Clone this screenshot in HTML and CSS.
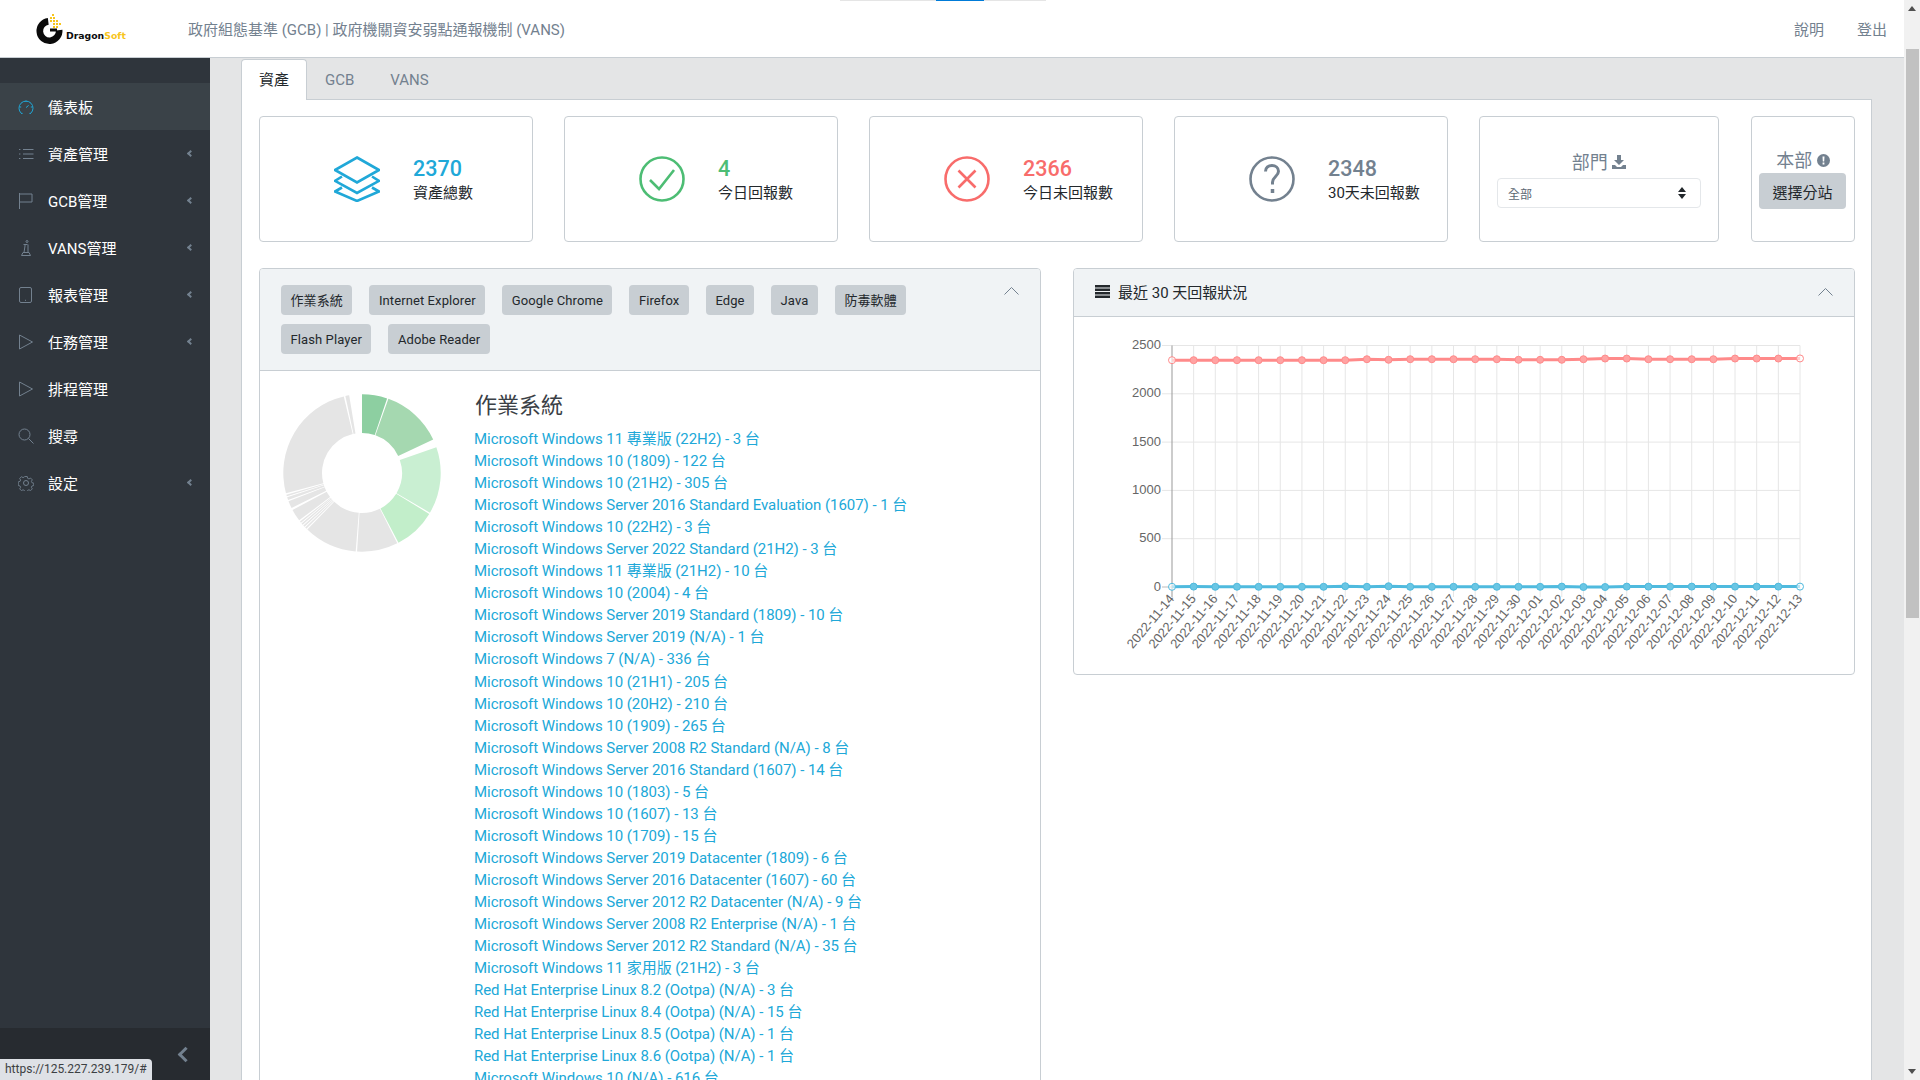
FILE: index.html
```html
<!DOCTYPE html>
<html lang="zh-Hant">
<head>
    <meta charset="UTF-8">
    <meta name="viewport" content="width=device-width, initial-scale=1.0">
    <title>DragonSoft</title>
    <link rel="stylesheet" href="styles.css">
</head>
<body>
    <div class="loader"><span class="loader-blue"></span></div>
    <div class="page">
        <header class="topbar">
            <div class="logo">
                <svg class="logo-mark" width="28" height="32" viewBox="0 0 28 32">
                    <circle cx="13.5" cy="18" r="9.7" fill="none" stroke="#0b0b0b" stroke-width="6.6" stroke-dasharray="45 16" transform="rotate(-5 13.5 18)"/>
                    <rect x="14" y="15.5" width="7" height="3" fill="#0b0b0b"/>
                    <g fill="#f7c51d">
                        <rect x="16" y="1" width="2" height="2"/>
                        <rect x="14" y="4" width="2" height="2"/><rect x="17" y="4" width="2" height="2"/>
                        <rect x="14" y="7" width="2" height="2"/><rect x="17" y="7" width="2" height="2"/><rect x="20" y="7" width="2" height="2"/>
                        <rect x="17" y="10" width="2" height="2"/><rect x="20" y="10" width="2" height="2"/><rect x="23" y="10" width="2" height="2"/>
                        <rect x="17" y="13" width="2" height="2"/><rect x="20" y="13" width="2" height="2"/>
                    </g>
                </svg>
                <span class="logo-text">Dragon<span class="logo-soft">Soft</span></span>
            </div>
            <div class="topbar-title">政府組態基準 (GCB) | 政府機關資安弱點通報機制 (VANS)</div>
            <nav class="topbar-links">
                <a href="#">說明</a>
                <a href="#">登出</a>
            </nav>
        </header>

        <div class="app-body">
            <aside class="sidebar">
                <ul class="nav">
                    <li class="nav-item active">
                        <svg class="nav-icon" viewBox="0 0 16 16"><path d="M3.2 14.2a7 7 0 1 1 9.6 0"/><path d="M3 14.4h1.6M11.4 14.4H13M8 8.6l2.6-2.2M8 1.6v1.4M2 8h1.2M12.8 8H14"/></svg>
                        <span>儀表板</span>
                    </li>
                    <li class="nav-item">
                        <svg class="nav-icon" viewBox="0 0 16 16"><path d="M1 3.5h1.4M1 8h1.4M1 12.5h1.4M5 3.5h10.5M5 8h10.5M5 12.5h10.5"/></svg>
                        <span>資產管理</span><i class="caret"></i>
                    </li>
                    <li class="nav-item">
                        <svg class="nav-icon" viewBox="0 0 16 16"><path d="M1.500 0v16M1.500 1h12.500v8H1.500"/></svg>
                        <span>GCB管理</span><i class="caret"></i>
                    </li>
                    <li class="nav-item">
                        <svg class="nav-icon" viewBox="0 0 16 16"><circle cx="9" cy="1.500" r="1"/><path d="M5.500 4.500h4M7 4.500v1.500l-1 6.500M10 4.500v8M3.500 15.500l1.500-3h6l1.500 3z"/></svg>
                        <span>VANS管理</span><i class="caret"></i>
                    </li>
                    <li class="nav-item">
                        <svg class="nav-icon" viewBox="0 0 16 16"><rect x="1.500" y="0.500" width="12" height="15" rx="1.500"/><path d="M7 13.300h1"/></svg>
                        <span>報表管理</span><i class="caret"></i>
                    </li>
                    <li class="nav-item">
                        <svg class="nav-icon" viewBox="0 0 16 16"><path d="M1.500 1l13 7-13 7z"/></svg>
                        <span>任務管理</span><i class="caret"></i>
                    </li>
                    <li class="nav-item">
                        <svg class="nav-icon" viewBox="0 0 16 16"><path d="M1.500 1l13 7-13 7z"/></svg>
                        <span>排程管理</span>
                    </li>
                    <li class="nav-item">
                        <svg class="nav-icon" viewBox="0 0 16 16"><circle cx="6.500" cy="6.500" r="5.500"/><path d="M10.500 10.500l5 5"/></svg>
                        <span>搜尋</span>
                    </li>
                    <li class="nav-item">
                        <svg class="nav-icon" viewBox="0 0 16 16"><circle cx="8" cy="8" r="2.500"/><path d="M6.600 .8h2.800l.4 2 1.500.7 1.800-1 1.900 2-1 1.700.6 1.500 2 .5v2.600l-2 .5-.6 1.500 1 1.700-1.900 2-1.800-1-1.500.7-.4 2H6.600l-.4-2-1.500-.7-1.800 1-1.900-2 1-1.700-.6-1.500-2-.5V6.700l2-.5.600-1.500-1-1.700 1.900-2 1.800 1 1.500-.7z" transform="translate(.8 .8) scale(.9)"/></svg>
                        <span>設定</span><i class="caret"></i>
                    </li>
                </ul>
                <div class="sidebar-footer"><i class="caret caret-big"></i></div>
            </aside>

            <main class="main">
                <div class="tabs">
                    <a class="tab active" href="#">資產</a>
                    <a class="tab" href="#">GCB</a>
                    <a class="tab" href="#">VANS</a>
                </div>
                <div class="tab-panel">
                    <div class="stats">
                        <div class="stat">
                            <svg class="stat-icon" viewBox="0 0 46 46" fill="none" stroke="#20a8d8" stroke-width="2.600"><path d="M23 1.500L45 14 23 26.500 1 14z"/><path d="M8 20.500l-7 4.300L23 37l22-12.200-7-4.300"/><path d="M8 31.500l-7 4L23 45l22-9.500-7-4"/></svg>
                            <div>
                                <div class="stat-num blue">2370</div>
                                <div class="stat-label">資產總數</div>
                            </div>
                        </div>
                        <div class="stat">
                            <svg class="stat-icon" viewBox="0 0 46 46" fill="none" stroke="#4dbd74" stroke-width="2.600"><circle cx="23" cy="23" r="21.500"/><path d="M11 24l9 9 15-19"/></svg>
                            <div>
                                <div class="stat-num green">4</div>
                                <div class="stat-label">今日回報數</div>
                            </div>
                        </div>
                        <div class="stat">
                            <svg class="stat-icon" viewBox="0 0 46 46" fill="none" stroke="#f86c6b" stroke-width="2.600"><circle cx="23" cy="23" r="21.500"/><path d="M14.500 14.500l17 17M31.500 14.500l-17 17"/></svg>
                            <div>
                                <div class="stat-num red">2366</div>
                                <div class="stat-label">今日未回報數</div>
                            </div>
                        </div>
                        <div class="stat">
                            <svg class="stat-icon" viewBox="0 0 46 46" fill="none" stroke="#73818f" stroke-width="2.600"><circle cx="23" cy="23" r="21.500"/><path d="M16.500 15.500c0-4 3-6 6.500-6s6.500 2.200 6.500 5.800c0 5-6 5.500-6 11v2.200" stroke-width="3"/><path d="M23.500 33v4" stroke-width="3.500"/></svg>
                            <div>
                                <div class="stat-num gray">2348</div>
                                <div class="stat-label">30天未回報數</div>
                            </div>
                        </div>
                        <div class="dept-card">
                            <div class="dept-title">部門
                                <svg width="14" height="14" viewBox="0 0 14 14" fill="#73818f"><path d="M5 0h4v5h3L7 10 2 5h3z"/><path d="M0 10h3l2 2h4l2-2h3v4H0z"/></svg>
                            </div>
                            <div class="dept-select">
                                <span>全部</span>
                                <svg width="8" height="12" viewBox="0 0 8 12" fill="#23282c"><path d="M4 0l4 5H0zM4 12L0 7h8z"/></svg>
                            </div>
                        </div>
                        <div class="branch-card">
                            <div class="branch-title">本部
                                <svg width="13" height="13" viewBox="0 0 13 13"><circle cx="6.500" cy="6.500" r="6.500" fill="#73818f"/><path d="M5.500 2.500h2l-.3 5h-1.400zM5.600 8.600h1.800v1.800H5.600z" fill="#fff"/></svg>
                            </div>
                            <button class="branch-btn">選擇分站</button>
                        </div>
                    </div>

                    <div class="columns">
                        <section class="panel panel-os">
                            <div class="panel-head chips-head">
                                <div class="chips">
                                    <a class="chip" href="#">作業系統</a>
                                    <a class="chip" href="#">Internet Explorer</a>
                                    <a class="chip" href="#">Google Chrome</a>
                                    <a class="chip" href="#">Firefox</a>
                                    <a class="chip" href="#">Edge</a>
                                    <a class="chip" href="#">Java</a>
                                    <a class="chip" href="#">防毒軟體</a>
                                    <a class="chip" href="#">Flash Player</a>
                                    <a class="chip" href="#">Adobe Reader</a>
                                </div>
                                <svg class="collapse-icon" width="15" height="8" viewBox="0 0 15 8"><path d="M.5 7.500l7-7 7 7"/></svg>
                            </div>
                            <div class="os-body">
                                <div class="donut-box"><svg id="donut" width="160" height="160" viewBox="-80 -80 160 160"></svg></div>
                                <div class="os-list">
                                    <h4>作業系統</h4>
                                    <a href="#">Microsoft Windows 11 專業版 (22H2) - 3 台</a>
                                    <a href="#">Microsoft Windows 10 (1809) - 122 台</a>
                                    <a href="#">Microsoft Windows 10 (21H2) - 305 台</a>
                                    <a href="#">Microsoft Windows Server 2016 Standard Evaluation (1607) - 1 台</a>
                                    <a href="#">Microsoft Windows 10 (22H2) - 3 台</a>
                                    <a href="#">Microsoft Windows Server 2022 Standard (21H2) - 3 台</a>
                                    <a href="#">Microsoft Windows 11 專業版 (21H2) - 10 台</a>
                                    <a href="#">Microsoft Windows 10 (2004) - 4 台</a>
                                    <a href="#">Microsoft Windows Server 2019 Standard (1809) - 10 台</a>
                                    <a href="#">Microsoft Windows Server 2019 (N/A) - 1 台</a>
                                    <a href="#">Microsoft Windows 7 (N/A) - 336 台</a>
                                    <a href="#">Microsoft Windows 10 (21H1) - 205 台</a>
                                    <a href="#">Microsoft Windows 10 (20H2) - 210 台</a>
                                    <a href="#">Microsoft Windows 10 (1909) - 265 台</a>
                                    <a href="#">Microsoft Windows Server 2008 R2 Standard (N/A) - 8 台</a>
                                    <a href="#">Microsoft Windows Server 2016 Standard (1607) - 14 台</a>
                                    <a href="#">Microsoft Windows 10 (1803) - 5 台</a>
                                    <a href="#">Microsoft Windows 10 (1607) - 13 台</a>
                                    <a href="#">Microsoft Windows 10 (1709) - 15 台</a>
                                    <a href="#">Microsoft Windows Server 2019 Datacenter (1809) - 6 台</a>
                                    <a href="#">Microsoft Windows Server 2016 Datacenter (1607) - 60 台</a>
                                    <a href="#">Microsoft Windows Server 2012 R2 Datacenter (N/A) - 9 台</a>
                                    <a href="#">Microsoft Windows Server 2008 R2 Enterprise (N/A) - 1 台</a>
                                    <a href="#">Microsoft Windows Server 2012 R2 Standard (N/A) - 35 台</a>
                                    <a href="#">Microsoft Windows 11 家用版 (21H2) - 3 台</a>
                                    <a href="#">Red Hat Enterprise Linux 8.2 (Ootpa) (N/A) - 3 台</a>
                                    <a href="#">Red Hat Enterprise Linux 8.4 (Ootpa) (N/A) - 15 台</a>
                                    <a href="#">Red Hat Enterprise Linux 8.5 (Ootpa) (N/A) - 1 台</a>
                                    <a href="#">Red Hat Enterprise Linux 8.6 (Ootpa) (N/A) - 1 台</a>
                                    <a href="#">Microsoft Windows 10 (N/A) - 616 台</a>
                                </div>
                            </div>
                        </section>

                        <section class="panel panel-chart">
                            <div class="panel-head chart-head">
                                <svg width="15" height="13" viewBox="0 0 15 13" fill="#23282c"><path d="M0 0h15v2.500H0zM0 3.500h15V6H0zM0 7h15v2.500H0zM0 10.500h15V13H0z"/></svg>
                                <span>最近 30 天回報狀況</span>
                                <svg class="collapse-icon" width="15" height="8" viewBox="0 0 15 8"><path d="M.5 7.500l7-7 7 7"/></svg>
                            </div>
                            <svg id="chart" width="780" height="357" viewBox="0 0 780 357"></svg>
                        </section>
                    </div>
                </div>
            </main>
        </div>
    </div>
    <div class="scrollbar">
        <i class="arrow-up"></i>
        <div class="thumb"></div>
        <i class="arrow-down"></i>
    </div>
    <div class="status-bubble">https://125.227.239.179/#</div>

    <script src="charts.js"></script>
</body>
</html>
```

FILE: styles.css
```css
* {
    box-sizing: border-box;
}
html, body {
    height: 100%;
}
body {
    margin: 0;
    display: flex;
    height: 1080px;
    overflow: hidden;
    font-family: Roboto, "Noto Sans CJK TC", sans-serif;
    font-size: 15px;
    color: #23282c;
    background-color: #e4e5e6;
}
a {
    text-decoration: none;
    color: inherit;
}
.page {
    flex: 1;
    min-width: 0;
    display: flex;
    flex-direction: column;
}

/* thin loading bar on top of everything */
.loader {
    position: absolute;
    top: 0;
    left: 840px;
    width: 206px;
    height: 1px;
    background-color: #e5e5e5;
    z-index: 5;
}
.loader-blue {
    display: block;
    width: 48px;
    height: 1px;
    margin-left: 96px;
    background-color: #007bd8;
}

.topbar {
    flex: none;
    display: flex;
    align-items: center;
    height: 58px;
    padding-left: 36px;
    background-color: #fff;
    border-bottom: 1px solid #c8ced3;
}
.logo {
    display: flex;
    width: 152px;
    height: 32px;
    margin-top: 1px;
}
.logo-text {
    align-self: flex-end;
    margin: 0 0 4px 2px;
    font-family: "DejaVu Sans", sans-serif;
    font-size: 9.3px;
    font-weight: 700;
    line-height: 11px;
    color: #0b0b0b;
}
.logo-soft {
    color: #f7c51d;
}
.topbar-title {
    color: #73818f;
}
.topbar-links {
    display: flex;
    gap: 33px;
    margin-left: auto;
    padding-right: 17px;
    color: #73818f;
}

.app-body {
    flex: 1;
    min-height: 0;
    display: flex;
}

.sidebar {
    flex: none;
    width: 210px;
    display: flex;
    flex-direction: column;
    background-color: #2f353c;
}
.nav {
    flex: 1;
    margin: 0;
    padding: 25px 0 0;
    list-style: none;
}
.nav-item {
    display: flex;
    align-items: center;
    height: 47px;
    padding: 0 17px 0 18px;
    color: #fff;
}
.nav-item.active {
    background-color: #3a4248;
}
.nav-icon {
    flex: none;
    width: 16px;
    height: 16px;
    margin-right: 14px;
    fill: none;
    stroke: #73818f;
    stroke-width: 1;
}
.active .nav-icon {
    stroke: #20a8d8;
}
.caret {
    width: 5px;
    height: 5px;
    margin-left: auto;
    border-left: 2px solid #73818f;
    border-bottom: 2px solid #73818f;
    transform: rotate(45deg);
}
.sidebar-footer {
    flex: none;
    display: flex;
    align-items: center;
    height: 52px;
    padding-right: 19px;
    background-color: #272b30;
}
.caret-big {
    width: 11px;
    height: 11px;
    border-width: 3px;
}

.main {
    flex: 1;
    min-width: 0;
    padding: 1px 32px 0 31px;
}
.tabs {
    display: flex;
    height: 41px;
    margin-bottom: -1px;
}
.tab {
    padding: 0 18px;
    line-height: 42px;
    color: #73818f;
    white-space: nowrap;
}
.tab.active {
    position: relative;
    width: 66px;
    padding: 0 0 0 17px;
    color: #23282c;
    background-color: #fff;
    border: 1px solid #c8ced3;
    border-bottom: none;
    border-radius: 4px 4px 0 0;
    line-height: 41px;
    z-index: 1;
}
.tab-panel {
    height: 1000px;
    padding: 16px 16px 0 17px;
    background-color: #fff;
    border: 1px solid #c8ced3;
}

.stats {
    display: flex;
    gap: 31px;
    height: 126px;
}
.stat, .dept-card, .branch-card {
    border: 1px solid #c8ced3;
    border-radius: 4px;
    background-color: #fff;
}
.stat {
    flex: none;
    width: 274px;
    display: flex;
    align-items: center;
    gap: 33px;
    padding-left: 74px;
}
.stat-icon {
    flex: none;
    width: 46px;
    height: 46px;
}
.stat-num {
    margin-top: 2px;
    font-size: 21.5px;
    font-weight: 500;
    line-height: 26px;
}
.stat-label {
    line-height: 22px;
}
.blue { color: #20a8d8; }
.green { color: #4dbd74; }
.red { color: #f86c6b; }
.gray { color: #73818f; }

.dept-card {
    flex: none;
    width: 240px;
    padding: 34px 17px 0;
    text-align: center;
}
.dept-title, .branch-title {
    font-size: 18px;
    line-height: 24px;
    color: #73818f;
}
.dept-select {
    display: flex;
    align-items: center;
    justify-content: space-between;
    height: 30px;
    margin-top: 3px;
    padding: 0 14px 0 10px;
    font-size: 12px;
    color: #5c6873;
    border: 1px solid #e4e7ea;
    border-radius: 4px;
}
.branch-card {
    flex: none;
    width: 104px;
    margin-left: 1px;
    padding: 32px 7px 0 7px;
    text-align: center;
}
.branch-btn {
    display: block;
    width: 87px;
    height: 36px;
    padding: 0;
    font-family: inherit;
    font-size: 15px;
    color: #23282c;
    background-color: #c8ced3;
    border: none;
    border-radius: 4px;
}

.columns {
    display: flex;
    align-items: flex-start;
    gap: 32px;
    margin-top: 26px;
}
.panel {
    flex: none;
    width: 782px;
    background-color: #fff;
    border: 1px solid #c8ced3;
    border-radius: 4px;
}
.panel-head {
    display: flex;
    background-color: #f0f3f5;
    border-bottom: 1px solid #c8ced3;
    border-radius: 3px 3px 0 0;
}
.chips-head {
    height: 102px;
    padding: 16px 21px 0;
}
.chips {
    display: flex;
    flex-wrap: wrap;
    align-content: flex-start;
    gap: 9px 17px;
    width: 660px;
}
.chip {
    height: 30px;
    padding: 0 9.5px;
    font-size: 13px;
    letter-spacing: .1px;
    line-height: 31px;
    background-color: #c8ced3;
    border-radius: 4px;
}
.collapse-icon {
    flex: none;
    margin-left: auto;
    fill: none;
    stroke: #73818f;
}
.chips-head .collapse-icon {
    margin-top: 2px;
}

.os-body {
    display: flex;
    height: 720px;
}
.donut-box {
    flex: none;
    width: 214px;
    padding: 22px 0 0 22px;
}
.os-list {
    overflow: hidden;
}
.os-list h4 {
    margin: 21px 0 8px;
    padding-left: 1px;
    font-size: 22px;
    font-weight: 400;
    line-height: 28px;
    color: #3a4046;
}
.os-list a {
    display: block;
    letter-spacing: -.05px;
    line-height: 22.04px;
    color: #20a8d8;
}

.chart-head {
    align-items: center;
    gap: 8px;
    height: 48px;
    padding: 0 21px 2px 21px;
}
#chart {
    display: block;
}
#chart text {
    font-family: "Liberation Sans", sans-serif;
    font-size: 13px;
    fill: #666;
}

.scrollbar {
    flex: none;
    position: relative;
    width: 16px;
    padding: 49px 1px 0 2px;
    background-color: #f1f1f1;
}
.thumb {
    height: 569px;
    background-color: #c1c1c1;
}
.arrow-up, .arrow-down {
    position: absolute;
    left: 4px;
    border-left: 4px solid transparent;
    border-right: 4px solid transparent;
}
.arrow-up {
    top: 6px;
    border-bottom: 5px solid #505050;
}
.arrow-down {
    bottom: 6px;
    border-top: 5px solid #505050;
}

/* browser link preview, lies over the sidebar */
.status-bubble {
    position: absolute;
    left: 0;
    bottom: 0;
    width: 152px;
    height: 21px;
    padding-left: 5px;
    font-size: 12px;
    line-height: 21px;
    color: #3c4043;
    background-color: #dee1e6;
    border-top-right-radius: 4px;
    white-space: nowrap;
}
```

FILE: charts.js
```js
const SVG_NS = 'http://www.w3.org/2000/svg';

function addEl(parent, tag, attrs, text) {
    const el = document.createElementNS(SVG_NS, tag);
    Object.keys(attrs).forEach(key => el.setAttribute(key, attrs[key]));
    if (text !== undefined) el.textContent = text;
    parent.appendChild(el);
    return el;
}

// doughnut, angles are degrees clockwise from the top
const slices = [
    [0, 18.6, '#8dcfa1'], [19.6, 64.8, '#a5d8b0'], [70.9, 120.3, '#c9efd2'], [121.3, 152.4, '#c2eeca'],
    [153.4, 183.6, '#e5e5e5'], [184.6, 224, '#e5e5e5'], [225, 226.2, '#e5e5e5'], [226.9, 228.2, '#e5e5e5'],
    [228.9, 230.2, '#e5e5e5'], [230.9, 232, '#e5e5e5'], [233, 242, '#e5e5e5'], [243.5, 249, '#e5e5e5'],
    [250, 252, '#e5e5e5'], [252.8, 254, '#e5e5e5'], [255, 346.6, '#e5e5e5'], [347.8, 350.6, '#e5e5e5']
];

function polar(radius, deg) {
    const rad = deg * Math.PI / 180;
    return (radius * Math.sin(rad)).toFixed(2) + ' ' + (-radius * Math.cos(rad)).toFixed(2);
}

const donut = document.getElementById('donut');
slices.forEach(s => {
    const large = s[1] - s[0] > 180 ? 1 : 0;
    const d = 'M' + polar(78.7, s[0]) + 'A78.7 78.7 0 ' + large + ' 1 ' + polar(78.7, s[1]) +
        'L' + polar(40, s[1]) + 'A40 40 0 ' + large + ' 0 ' + polar(40, s[0]) + 'Z';
    addEl(donut, 'path', { d: d, fill: s[2] });
});

const chart = document.getElementById('chart');
const plotLeft = 98, plotRight = 726, plotTop = 28.5, plotBottom = 270;
const stepX = (plotRight - plotLeft) / 29;

function yOf(v) {
    return plotTop + (2500 - v) * (plotBottom - plotTop) / 2500;
}

const days = [];
for (let d = 14; d <= 30; d++) days.push('2022-11-' + d);
for (let d = 1; d <= 13; d++) days.push('2022-12-' + String(d).padStart(2, '0'));

const red = [2348, 2348, 2348, 2348, 2348, 2348, 2348, 2348, 2348, 2358, 2352, 2358, 2358, 2358, 2358, 2358,
    2352, 2352, 2352, 2358, 2365, 2365, 2358, 2358, 2358, 2358, 2365, 2365, 2365, 2366];
const blue = [2, 4, 2, 3, 2, 2, 2, 2, 8, 2, 8, 2, 2, 2, 2, 2, 2, 2, 4, 0, 0, 4, 4, 4, 4, 4, 4, 4, 4, 4];

[0, 500, 1000, 1500, 2000, 2500].forEach(v => {
    const y = yOf(v);
    addEl(chart, 'line', { x1: plotLeft - 10, x2: plotRight, y1: y, y2: y, stroke: v === 0 ? '#bbb' : '#e6e6e6' });
    addEl(chart, 'text', { x: plotLeft - 11, y: y + 3.500, 'text-anchor': 'end' }, v);
});

days.forEach((day, i) => {
    const x = plotLeft + i * stepX;
    addEl(chart, 'line', { x1: x, x2: x, y1: plotTop, y2: plotBottom + 10, stroke: i === 0 ? '#999' : '#e6e6e6' });
    addEl(chart, 'text', { 'text-anchor': 'end', transform: 'translate(' + (x + 3) + ' ' + (plotBottom + 12) + ') rotate(-50)' }, day);
});

function drawSeries(values, color, fill) {
    const pts = values.map((v, i) => (plotLeft + i * stepX).toFixed(1) + ',' + yOf(v).toFixed(1));
    addEl(chart, 'polyline', { points: pts.join(' '), fill: 'none', stroke: color, 'stroke-width': 3 });
    values.forEach((v, i) => {
        const edge = i === 0 || i === values.length - 1;
        addEl(chart, 'circle', {
            cx: plotLeft + i * stepX, cy: yOf(v), r: 3.500,
            fill: edge ? 'rgba(255,255,255,.6)' : fill, stroke: color
        });
    });
}

drawSeries(red, '#ff8a8a', '#ffa3a3');
drawSeries(blue, '#4fbade', '#6ac6e4');
```
